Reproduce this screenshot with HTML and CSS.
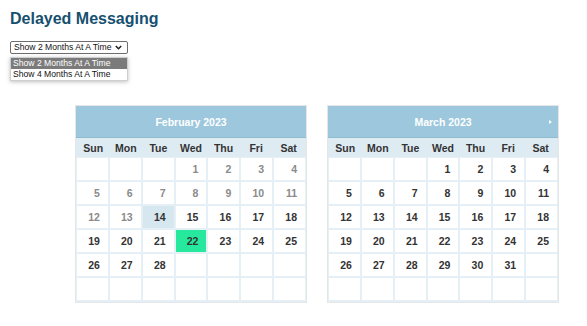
FILE: index.html
```html
<!DOCTYPE html>
<html>
<head>
<meta charset="utf-8">
<link rel="stylesheet" href="styles.css">
</head>
<body>
<h1 class="title">Delayed Messaging</h1>
<div class="picker">
  <div class="select"><span>Show 2 Months At A Time</span><svg class="chev" width="7" height="5" viewBox="0 0 7 5"><path d="M0.8 1 L3.5 3.7 L6.2 1" fill="none" stroke="#222" stroke-width="1.6"/></svg></div>
  <div class="options">
    <div class="opt sel">Show 2 Months At A Time</div>
    <div class="opt">Show 4 Months At A Time</div>
  </div>
</div>
<div class="cals">
  <div class="cal">
    <div class="head">February 2023</div>
    <div class="dow"><span>Sun</span><span>Mon</span><span>Tue</span><span>Wed</span><span>Thu</span><span>Fri</span><span>Sat</span></div>
    <div class="grid">
      <div class="c"></div><div class="c"></div><div class="c"></div><div class="c past">1</div><div class="c past">2</div><div class="c past">3</div><div class="c past">4</div>
      <div class="c past">5</div><div class="c past">6</div><div class="c past">7</div><div class="c past">8</div><div class="c past">9</div><div class="c past">10</div><div class="c past">11</div>
      <div class="c past">12</div><div class="c past">13</div><div class="c today">14</div><div class="c">15</div><div class="c">16</div><div class="c">17</div><div class="c">18</div>
      <div class="c">19</div><div class="c">20</div><div class="c">21</div><div class="c chosen">22</div><div class="c">23</div><div class="c">24</div><div class="c">25</div>
      <div class="c">26</div><div class="c">27</div><div class="c">28</div><div class="c"></div><div class="c"></div><div class="c"></div><div class="c"></div>
      <div class="c"></div><div class="c"></div><div class="c"></div><div class="c"></div><div class="c"></div><div class="c"></div><div class="c"></div>
    </div>
  </div>
  <div class="cal">
    <div class="head">March 2023<span class="next"></span></div>
    <div class="dow"><span>Sun</span><span>Mon</span><span>Tue</span><span>Wed</span><span>Thu</span><span>Fri</span><span>Sat</span></div>
    <div class="grid">
      <div class="c"></div><div class="c"></div><div class="c"></div><div class="c">1</div><div class="c">2</div><div class="c">3</div><div class="c">4</div>
      <div class="c">5</div><div class="c">6</div><div class="c">7</div><div class="c">8</div><div class="c">9</div><div class="c">10</div><div class="c">11</div>
      <div class="c">12</div><div class="c">13</div><div class="c">14</div><div class="c">15</div><div class="c">16</div><div class="c">17</div><div class="c">18</div>
      <div class="c">19</div><div class="c">20</div><div class="c">21</div><div class="c">22</div><div class="c">23</div><div class="c">24</div><div class="c">25</div>
      <div class="c">26</div><div class="c">27</div><div class="c">28</div><div class="c">29</div><div class="c">30</div><div class="c">31</div><div class="c"></div>
      <div class="c"></div><div class="c"></div><div class="c"></div><div class="c"></div><div class="c"></div><div class="c"></div><div class="c"></div>
    </div>
  </div>
</div>
</body>
</html>
```
FILE: styles.css
```css
* { box-sizing: border-box; }
body {
  margin: 0;
  padding: 10px;
  background: #fff;
  font-family: "Liberation Sans", Arial, sans-serif;
}
.title {
  margin: 0;
  font-size: 16px;
  line-height: 18px;
  font-weight: bold;
  color: #17506f;
}
.picker {
  position: relative;
  margin-top: 13px;
  width: 118px;
}
.select {
  display: flex;
  align-items: center;
  justify-content: space-between;
  height: 13px;
  width: 118px;
  border: 1px solid #6d6d6d;
  border-radius: 2px;
  padding: 0 5px 0 3px;
  font-size: 8.6px;
  color: #111;
  line-height: 11px;
}
.options {
  position: absolute;
  left: 0;
  top: 16px;
  width: 118px;
  background: #fff;
  border: 1px solid #cfcfcf;
  box-shadow: 0 1px 4px rgba(0,0,0,0.25);
  padding: 0;
}
.opt {
  height: 11px;
  line-height: 11px;
  font-size: 8.6px;
  padding-left: 2px;
  color: #111;
}
.opt.sel {
  background: #7b7b7b;
  color: #fff;
}
.cals {
  display: flex;
  gap: 20px;
  margin-top: 51px;
  margin-left: 65px;
}
.cal {
  width: 232px;
  border: 1px solid #e6e6e6;
  font-size: 10.5px;
  font-weight: bold;
}
.head {
  position: relative;
  height: 32px;
  background: #9cc7dc;
  color: #fff;
  font-size: 10.5px;
  display: flex;
  align-items: center;
  justify-content: center;
  border-bottom: 1px solid #8fbbd1;
}
.next {
  position: absolute;
  right: 6px;
  top: 14px;
  width: 0;
  height: 0;
  border-left: 3px solid #fff;
  border-top: 2.5px solid transparent;
  border-bottom: 2.5px solid transparent;
}
.dow {
  display: grid;
  grid-template-columns: repeat(7, 1fr);
  height: 19px;
  background: #dfebf3;
  color: #333;
  align-items: center;
  padding: 0 1px;
}
.dow span { text-align: center; }
.grid {
  display: grid;
  grid-template-columns: repeat(7, 1fr);
  grid-auto-rows: 22px;
  gap: 2px;
  padding: 1px 1px 2px 1px;
  background: #e4eff6;
}
.c {
  background: #fff;
  color: #333;
  display: flex;
  align-items: center;
  justify-content: flex-end;
  padding-right: 8px;
}
.c.past { color: #8a8a8a; }
.c.today { background: #d6e7f0; }
.c.chosen { background: #27e99d; }
```
